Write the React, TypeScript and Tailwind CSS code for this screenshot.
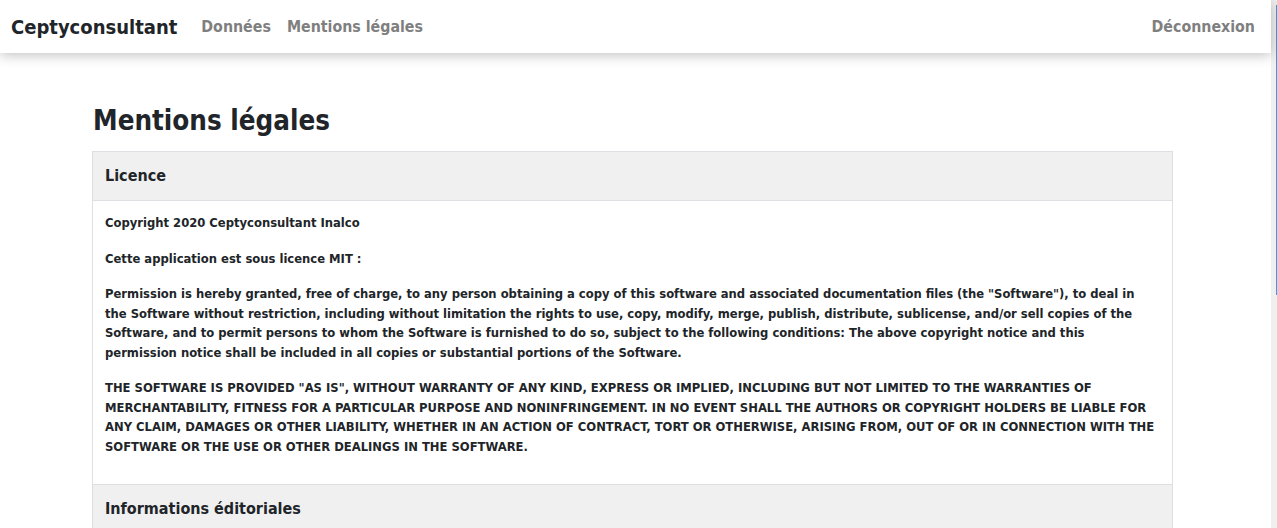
import React from "react";

const navLinks = ["Données", "Mentions légales"];

const mitText = [
  "Copyright 2020 Ceptyconsultant Inalco",
  "Cette application est sous licence MIT :",
  'Permission is hereby granted, free of charge, to any person obtaining a copy of this software and associated documentation files (the "Software"), to deal in the Software without restriction, including without limitation the rights to use, copy, modify, merge, publish, distribute, sublicense, and/or sell copies of the Software, and to permit persons to whom the Software is furnished to do so, subject to the following conditions: The above copyright notice and this permission notice shall be included in all copies or substantial portions of the Software.',
  'THE SOFTWARE IS PROVIDED "AS IS", WITHOUT WARRANTY OF ANY KIND, EXPRESS OR IMPLIED, INCLUDING BUT NOT LIMITED TO THE WARRANTIES OF MERCHANTABILITY, FITNESS FOR A PARTICULAR PURPOSE AND NONINFRINGEMENT. IN NO EVENT SHALL THE AUTHORS OR COPYRIGHT HOLDERS BE LIABLE FOR ANY CLAIM, DAMAGES OR OTHER LIABILITY, WHETHER IN AN ACTION OF CONTRACT, TORT OR OTHERWISE, ARISING FROM, OUT OF OR IN CONNECTION WITH THE SOFTWARE OR THE USE OR OTHER DEALINGS IN THE SOFTWARE.',
];

function Navbar() {
  return (
    <nav className="relative z-10 flex h-[53px] items-center bg-white pl-[11px] pr-4 shadow-[0_2px_12px_rgba(0,0,0,0.25)]">
      <span className="mr-6 text-[20px] font-bold text-[#212529]">Ceptyconsultant</span>
      <div className="flex gap-4">
        {navLinks.map((link) => (
          <a key={link} className="text-[15.8px] font-bold text-[#7f7f7f]">
            {link}
          </a>
        ))}
      </div>
      <a className="ml-auto text-[15.8px] font-bold text-[#7f7f7f]">Déconnexion</a>
    </nav>
  );
}

export default function App() {
  return (
    <div className="flex h-[528px] overflow-hidden bg-white font-['DejaVu_Sans_Condensed','DejaVu_Sans',sans-serif] text-[#212529]">
      <div className="flex-1">
        <Navbar />
        <main className="ml-[92px] w-[1081px] pt-[50px]">
          <h1 className="mb-[14px] pl-px text-[27.5px] font-bold leading-[34px]">Mentions légales</h1>
          <div className="border border-[#dfdfe3]">
            <div className="border-b border-[#dfdfe3] bg-[#f0f0f0] px-3 py-3 text-[16px] font-bold leading-6">
              Licence
            </div>
            <div className="px-3 pt-3 pb-3 text-[12.88px] font-bold leading-[19.5px]">
              {mitText.map((p, i) => (
                <p key={i} className="mb-4">
                  {p}
                </p>
              ))}
            </div>
            <div className="border-t border-[#dfdfe3] bg-[#f0f0f0] px-3 py-3 text-[16px] font-bold leading-6">
              Informations éditoriales
            </div>
            <div className="h-20" />
          </div>
        </main>
      </div>
      <div className="flex w-[6px] justify-end bg-[#f0f0f0] pt-[5px]">
        <div className="h-[290px] w-px bg-[#3a9ae8]" />
      </div>
    </div>
  );
}
